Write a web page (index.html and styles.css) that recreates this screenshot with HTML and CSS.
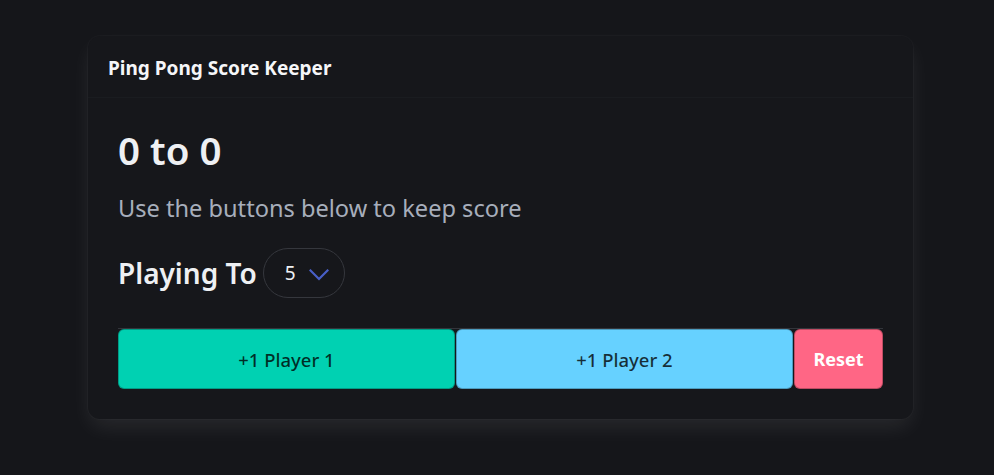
FILE: index.html
```html
<!DOCTYPE html>
<html lang="en">
<head>
<meta charset="utf-8">
<title>Ping Pong Score Keeper</title>
<link rel="stylesheet" href="styles.css">
</head>
<body>
<div class="card">
  <header class="card-header">
    <p class="card-title">Ping Pong Score Keeper</p>
  </header>
  <div class="card-content">
    <h1 class="score">0 to 0</h1>
    <p class="subtitle">Use the buttons below to keep score</p>
    <div class="playing">
      <h2 class="playing-label">Playing To</h2>
      <div class="select">
        <span class="select-value">5</span>
        <svg class="chev" width="20" height="12" viewBox="0 0 20 12" aria-hidden="true">
          <polyline points="1.5,1.5 10,10 18.5,1.5" fill="none" stroke="#485fc7" stroke-width="2.2" stroke-linecap="square"/>
        </svg>
      </div>
    </div>
    <div class="buttons">
      <button class="btn btn-primary">+1 Player 1</button>
      <button class="btn btn-info">+1 Player 2</button>
      <button class="btn btn-danger">Reset</button>
    </div>
  </div>
</div>
</body>
</html>
```

FILE: styles.css
```css
html, body {
  margin: 0;
  padding: 0;
  background: #15161a;
}
body {
  font-family: "Noto Sans", "Open Sans", sans-serif;
  padding: 36px 0 0 88px;
  height: 475px;
  box-sizing: border-box;
  overflow: hidden;
}
.card {
  width: 825px;
  background: #16171b;
  border-radius: 12px;
  box-shadow: 0 10px 22px -3px rgba(255, 255, 255, 0.09), 0 0 0 1px rgba(255, 255, 255, 0.025);
}
.card-header {
  height: 61px;
  border-bottom: 1px solid #1a1c20;
  display: flex;
  align-items: center;
  padding: 0 20px;
}
.card-title {
  margin: 0;
  font-size: 19px;
  font-weight: 700;
  color: #f5f6f8;
  position: relative;
  top: 1px;
}
.card-content {
  padding: 30px;
}
.score {
  margin: 0;
  font-size: 38.5px;
  line-height: 45px;
  font-weight: 600;
  color: #eef0f3;
}
.subtitle {
  margin: 20px 0 0;
  font-size: 23.6px;
  line-height: 31px;
  color: #a7aebb;
}
.playing {
  margin-top: 24px;
  display: flex;
  align-items: center;
  gap: 6px;
}
.playing-label {
  margin: 0;
  font-size: 28px;
  line-height: 50px;
  font-weight: 600;
  color: #eef0f3;
}
.select {
  box-sizing: border-box;
  width: 82px;
  height: 50px;
  border: 1px solid #35373d;
  border-radius: 25px;
  display: flex;
  align-items: center;
  padding-left: 21px;
}
.select-value {
  font-size: 19px;
  color: #eef0f3;
}
.chev {
  margin-left: 13px;
  margin-top: 3px;
}
.buttons {
  margin-top: 30px;
  border-top: 1px solid #33353b;
  display: flex;
  gap: 1px;
}
.btn {
  height: 60px;
  border: 1px solid rgba(0, 0, 0, 0.25);
  border-radius: 6px;
  font-family: inherit;
  font-size: 18.5px;
  font-weight: 500;
  cursor: pointer;
}
.btn-primary {
  flex: 1;
  background: #00d1b2;
  color: rgba(0, 0, 0, 0.78);
}
.btn-info {
  flex: 1;
  background: #66d1ff;
  color: rgba(0, 0, 0, 0.78);
}
.btn-danger {
  width: 89px;
  background: #ff6685;
  color: #ffffff;
  font-size: 18px;
  font-weight: 700;
}
```
